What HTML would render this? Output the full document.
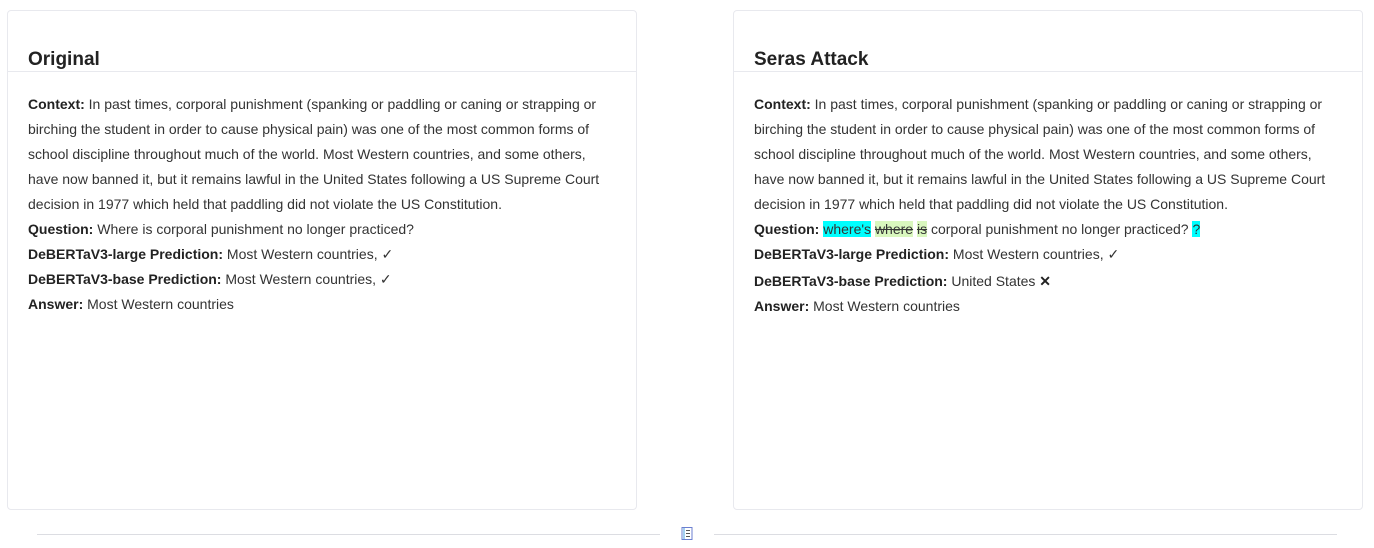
<!DOCTYPE html>
<html><head><style>
body{margin:0;background:#fff;font-family:"Liberation Sans",Arial,sans-serif;color:#333;width:1374px;height:548px;overflow:hidden;position:relative}
.card{position:absolute;top:10px;width:628px;height:498px;border:1px solid #e8e9ee;border-radius:4px;box-sizing:content-box}
.h{height:60px;border-bottom:1px solid #e8e9ee;position:relative}
.h span{position:absolute;left:20px;top:38px;font-size:19px;font-weight:bold;color:#222}
.b{padding:20px 20px 0 20px;font-size:14px;line-height:25px;color:#333}
b{color:#222}
.c{background:#00ffff}.g{background:#d9f7be;text-decoration:line-through}
.line{position:absolute;top:534px;height:1px;background:#dcdde2}
</style></head><body>
<div class="card" style="left:7px"><div class="h"><span>Original</span></div>
<div class="b"><b>Context:</b> In past times, corporal punishment (spanking or paddling or caning or strapping or birching the student in order to cause physical pain) was one of the most common forms of school discipline throughout much of the world. Most Western countries, and some others, have now banned it, but it remains lawful in the United States following a US Supreme Court decision in 1977 which held that paddling did not violate the US Constitution.<br>
<b>Question:</b> Where is corporal punishment no longer practiced?<br>
<b>DeBERTaV3-large Prediction:</b> Most Western countries, ✓<br>
<b>DeBERTaV3-base Prediction:</b> Most Western countries, ✓<br>
<b>Answer:</b> Most Western countries</div></div>
<div class="card" style="left:733px"><div class="h"><span>Seras Attack</span></div>
<div class="b"><b>Context:</b> In past times, corporal punishment (spanking or paddling or caning or strapping or birching the student in order to cause physical pain) was one of the most common forms of school discipline throughout much of the world. Most Western countries, and some others, have now banned it, but it remains lawful in the United States following a US Supreme Court decision in 1977 which held that paddling did not violate the US Constitution.<br>
<b>Question:</b> <span class="c">where's</span> <span class="g">where</span> <span class="g">is</span> corporal punishment no longer practiced? <span class="c">?</span><br>
<b>DeBERTaV3-large Prediction:</b> Most Western countries, ✓<br>
<div style="line-height:25px;margin-top:2px"><b>DeBERTaV3-base Prediction:</b> United States <b>✕</b></div>
<b>Answer:</b> Most Western countries</div></div>
<div class="line" style="left:37px;width:623px"></div>
<div class="line" style="left:714px;width:623px"></div>
<svg style="position:absolute;left:681px;top:527px" width="12" height="13" viewBox="0 0 12 13"><rect x="1" y="0.5" width="10" height="12" fill="none" stroke="#6b7fd0"/><line x1="3" y1="1" x2="3" y2="12" stroke="#4aa0e0"/><path d="M5 3.5h4M5 6.5h4M5 9.5h4" stroke="#555"/></svg>
</body></html>
